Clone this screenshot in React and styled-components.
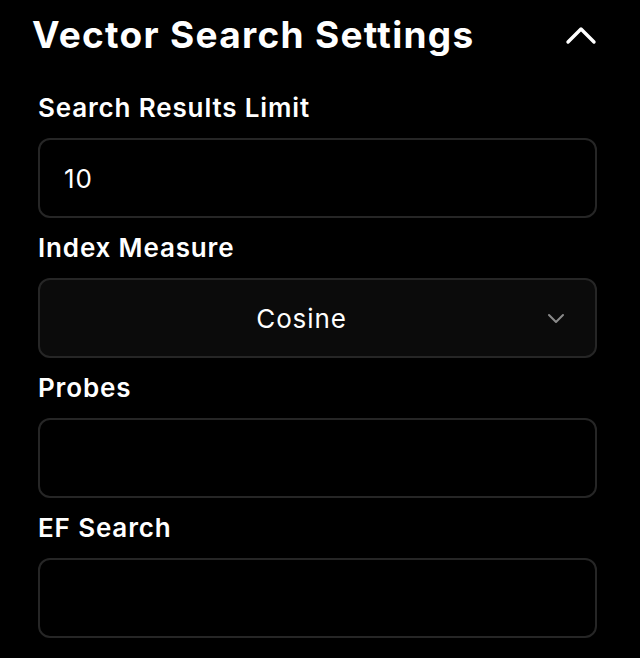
import React, { useState } from 'react';
import styled, { createGlobalStyle } from 'styled-components';

const GlobalStyle = createGlobalStyle`
	html, body {
		margin: 0;
		background: #000;
		font-family: Inter, 'Noto Sans', 'Liberation Sans', sans-serif;
		color: #fff;
	}
`;

const Panel = styled.div`
	width: 640px;
	height: 658px;
	overflow: hidden;
	background: #000;
	box-sizing: border-box;
`;

const Header = styled.div`
	display: flex;
	align-items: center;
	justify-content: space-between;
	height: 70px;
	padding: 0 42px 0 32px;
	box-sizing: border-box;
`;

const Title = styled.h2`
	margin: 0;
	font-size: 37px;
	line-height: 44px;
	font-weight: 700;
	letter-spacing: 1.3px;
	white-space: nowrap;
`;

const ToggleButton = styled.button`
	display: flex;
	align-items: center;
	justify-content: center;
	background: none;
	border: none;
	padding: 0;
	color: #fff;
	cursor: pointer;
`;

const Fields = styled.div`
	display: flex;
	flex-direction: column;
	padding: 23px 43px 0 38px;
	gap: 15px;
`;

const Field = styled.label`
	display: flex;
	flex-direction: column;
	gap: 15px;
`;

const LabelText = styled.span`
	font-size: 26px;
	line-height: 30px;
	font-weight: 600;
	letter-spacing: 0.85px;
	white-space: nowrap;
`;

const Input = styled.input`
	height: 80px;
	box-sizing: border-box;
	width: 100%;
	border: 2px solid #262626;
	border-radius: 12px;
	background: #000;
	color: #fff;
	font-family: inherit;
	font-size: 26px;
	letter-spacing: 1px;
	padding: 0 24px;
	outline: none;
`;

const SelectBox = styled.div`
	display: flex;
	align-items: center;
	height: 80px;
	box-sizing: border-box;
	padding: 0 30px 0 16px;
	border: 2px solid #262626;
	border-radius: 12px;
	background: #0b0b0b;
	cursor: pointer;
`;

const SelectValue = styled.span`
	flex: 1;
	text-align: center;
	font-size: 26px;
	letter-spacing: 0.9px;
`;

const Caret = styled.span`
	display: flex;
	color: #8a8a8a;
`;

const App = () => {
	const [limit, setLimit] = useState('10');
	const [probes, setProbes] = useState('');
	const [efSearch, setEfSearch] = useState('');

	return (
		<Panel>
			<GlobalStyle />
			<Header>
				<Title>Vector Search Settings</Title>
				<ToggleButton type="button">
					<svg width="34" height="22" viewBox="0 0 34 22" fill="none">
						<path d="M4 18 L17 5 L30 18" stroke="currentColor" strokeWidth="3.4" strokeLinecap="round" strokeLinejoin="round" />
					</svg>
				</ToggleButton>
			</Header>
			<Fields>
				<Field>
					<LabelText>Search Results Limit</LabelText>
					<Input type="text" value={limit} onChange={(e) => setLimit(e.target.value)} />
				</Field>
				<Field>
					<LabelText>Index Measure</LabelText>
					<SelectBox>
						<SelectValue>Cosine</SelectValue>
						<Caret>
							<svg width="18" height="12" viewBox="0 0 18 12" fill="none">
								<path d="M2 3 L9 10 L16 3" stroke="currentColor" strokeWidth="2" strokeLinecap="round" strokeLinejoin="round" />
							</svg>
						</Caret>
					</SelectBox>
				</Field>
				<Field>
					<LabelText>Probes</LabelText>
					<Input type="text" value={probes} onChange={(e) => setProbes(e.target.value)} />
				</Field>
				<Field>
					<LabelText>EF Search</LabelText>
					<Input type="text" value={efSearch} onChange={(e) => setEfSearch(e.target.value)} />
				</Field>
			</Fields>
		</Panel>
	);
};

export default App;
